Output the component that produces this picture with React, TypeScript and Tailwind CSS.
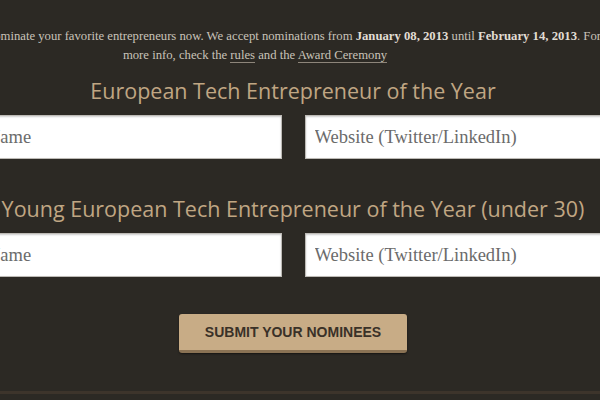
export default function App() {
  const serif = { fontFamily: '"Liberation Serif", "DejaVu Serif", serif' };
  return (
    <div className="h-[400px] w-[600px] overflow-hidden bg-[#2c2924]">
      <div className="ml-[-23px] w-[632px] pt-[27px]">
        <p
          className="text-center text-[12.7px] leading-[19px] text-[#c9c3b9]"
          style={serif}
        >
          <span className="whitespace-nowrap">
            Nominate your favorite entrepreneurs now. We accept nominations from{' '}
            <b className="text-[#e2ddd4]">January 08, 2013</b> until{' '}
            <b className="text-[#e2ddd4]">February 14, 2013</b>. For
          </span>
          <br />
          <span className="inline-block pr-[76px]">
            more info, check the{' '}
            <span className="border-b border-[#8d857a]">rules</span> and the{' '}
            <span className="border-b border-[#8d857a]">Award Ceremony</span>
          </span>
        </p>

        <Category title="European Tech Entrepreneur of the Year" top="mt-[12px]" />
        <Category
          title="Young European Tech Entrepreneur of the Year (under 30)"
          top="mt-[36px]"
        />

        <div className="mt-[37px] flex justify-center">
          <button
            className="h-[39px] w-[228px] rounded-[3px] border-b-[3px] border-[#8a7254] bg-[#c8ac86] text-[14px] font-bold uppercase text-[#3a3128] shadow-[0_1px_2px_rgba(0,0,0,0.5)]"
            style={{ fontFamily: '"Liberation Sans", Arial, sans-serif' }}
          >
            Submit your nominees
          </button>
        </div>
      </div>
      <div className="mt-[38px] h-[3px] w-full bg-[#3d342b]" />
    </div>
  );
}

function Category({ title, top }: { title: string; top: string }) {
  const inputClass =
    'h-[44px] w-full border border-[#bdbab5] bg-white px-[9px] text-[18.5px] text-[#555] placeholder:text-[#6b6b6b] shadow-[inset_0_1px_2px_rgba(0,0,0,0.2)] outline-none';
  return (
    <div className={top}>
      <h2
        className="text-center text-[21.5px] leading-[28px] text-[#c0a683]"
        style={{ fontFamily: '"Open Sans", Lato, sans-serif' }}
      >
        {title}
      </h2>
      <div className="mt-[10px] grid grid-cols-2 gap-[23px]">
        <input
          className={inputClass}
          placeholder="Name"
          style={{ fontFamily: '"Liberation Serif", "DejaVu Serif", serif' }}
        />
        <input
          className={inputClass}
          placeholder="Website (Twitter/LinkedIn)"
          style={{ fontFamily: '"Liberation Serif", "DejaVu Serif", serif' }}
        />
      </div>
    </div>
  );
}
